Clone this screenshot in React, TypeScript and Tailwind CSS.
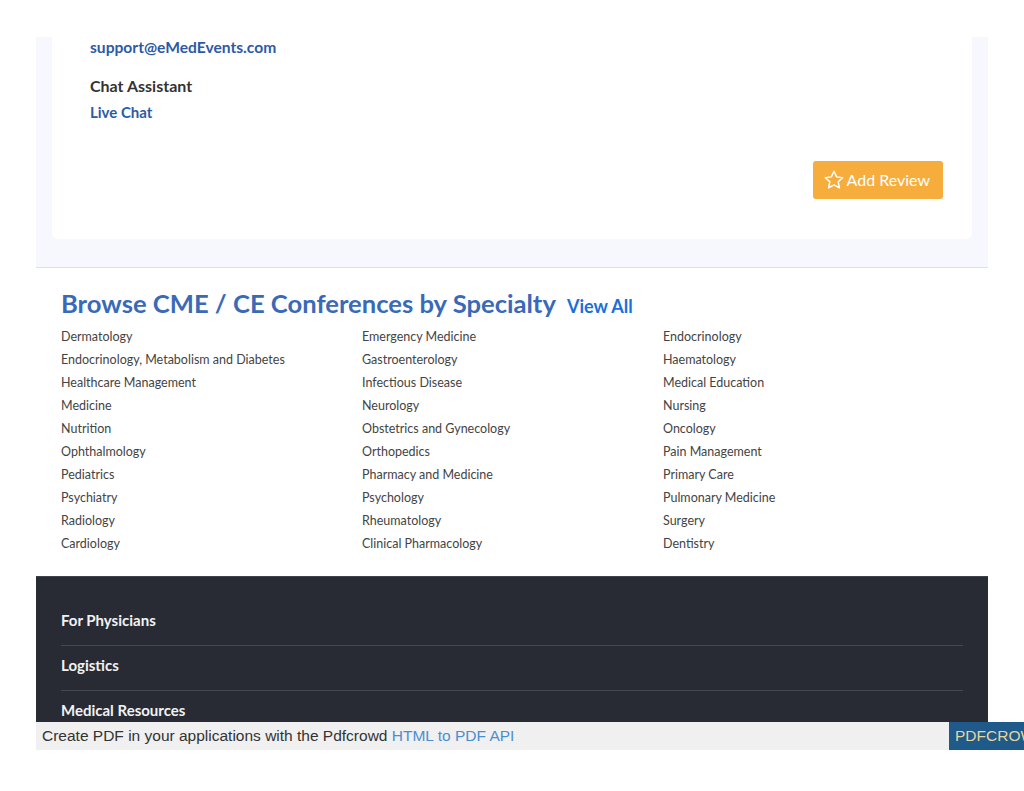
import React from "react";

const cols: string[][] = [
  ["Dermatology", "Endocrinology, Metabolism and Diabetes", "Healthcare Management", "Medicine", "Nutrition", "Ophthalmology", "Pediatrics", "Psychiatry", "Radiology", "Cardiology"],
  ["Emergency Medicine", "Gastroenterology", "Infectious Disease", "Neurology", "Obstetrics and Gynecology", "Orthopedics", "Pharmacy and Medicine", "Psychology", "Rheumatology", "Clinical Pharmacology"],
  ["Endocrinology", "Haematology", "Medical Education", "Nursing", "Oncology", "Pain Management", "Primary Care", "Pulmonary Medicine", "Surgery", "Dentistry"],
];

function StarIcon() {
  return (
    <svg width="22" height="22" viewBox="0 0 24 24" fill="none" stroke="white" strokeWidth="1.6" strokeLinejoin="round">
      <path d="M12 2.5l2.9 6.1 6.6.8-4.9 4.6 1.3 6.6L12 17.3l-5.9 3.3 1.3-6.6-4.9-4.6 6.6-.8z" />
    </svg>
  );
}

export default function App() {
  return (
    <div className="min-h-[791px] bg-white pt-[37px] font-['Lato','Noto_Sans',sans-serif]">
      <div className="ml-[36px] w-[952px]">
        {/* Contact panel */}
        <div className="bg-[#f7f8fd] px-[16px] pb-[28px] border-b border-[#dfe1e7]">
          <div className="bg-white rounded-b-[6px] pl-[38px] pr-[29px] pb-[40px]">
            <div className="text-[15.6px] leading-[20px] font-bold text-[#2c5aa6]">support@eMedEvents.com</div>
            <div className="mt-[18px] text-[16px] leading-[22px] font-bold text-[#333333]">Chat Assistant</div>
            <div className="mt-[5px] text-[15px] leading-[20px] font-bold text-[#2c5aa6]">Live Chat</div>
            <div className="mt-[39px] flex justify-end">
              <button className="h-[38px] flex items-center gap-[2px] bg-[#f6ad3c] rounded-[3px] pl-[10px] pr-[13px] text-white text-[16px]">
                <StarIcon />
                <span>Add Review</span>
              </button>
            </div>
          </div>
        </div>

        {/* Browse section */}
        <div className="px-[25px] pt-[17px] pb-[21px]">
          <div className="flex items-baseline gap-[11px]">
            <h2 className="text-[25.6px] leading-[36px] font-bold text-[#3a6ab7]">Browse CME / CE Conferences by Specialty</h2>
            <a className="text-[18px] font-bold text-[#1b6fd8]">View All</a>
          </div>
          <div className="mt-[4px] grid grid-cols-[301px_301px_1fr]">
            {cols.map((c, i) => (
              <div key={i} className="flex flex-col">
                {c.map((t) => (
                  <div key={t} className="text-[12.5px] leading-[23px] text-[#444444]">{t}</div>
                ))}
              </div>
            ))}
          </div>
        </div>

        {/* Footer */}
        <div className="h-[146px] overflow-hidden bg-[#282b34] border-t border-[#3e424b] px-[25px] pt-[24px]">
          {["For Physicians", "Logistics", "Medical Resources"].map((t) => (
            <div key={t} className="pt-[8px] pb-[14px] border-b border-[#454952] text-[15px] leading-[22px] font-bold text-[#f2f2f2]">{t}</div>
          ))}
        </div>
      </div>

      {/* Pdfcrowd bar */}
      <div className="ml-[36px] h-[28px] flex overflow-hidden font-['Liberation_Sans',Arial,sans-serif]">
        <div className="flex-1 bg-[#f0f0f0] pl-[6px] flex items-center text-[15.5px] text-[#333333] whitespace-nowrap">
          Create PDF in your applications with the Pdfcrowd&nbsp;<span className="text-[#4a8fd0]">HTML to PDF API</span>
        </div>
        <div className="w-[75px] bg-[#1f5a8b] pl-[6px] flex items-center text-[15.5px] text-[#e3d6a0] whitespace-nowrap overflow-hidden">PDFCROWD</div>
      </div>
    </div>
  );
}
